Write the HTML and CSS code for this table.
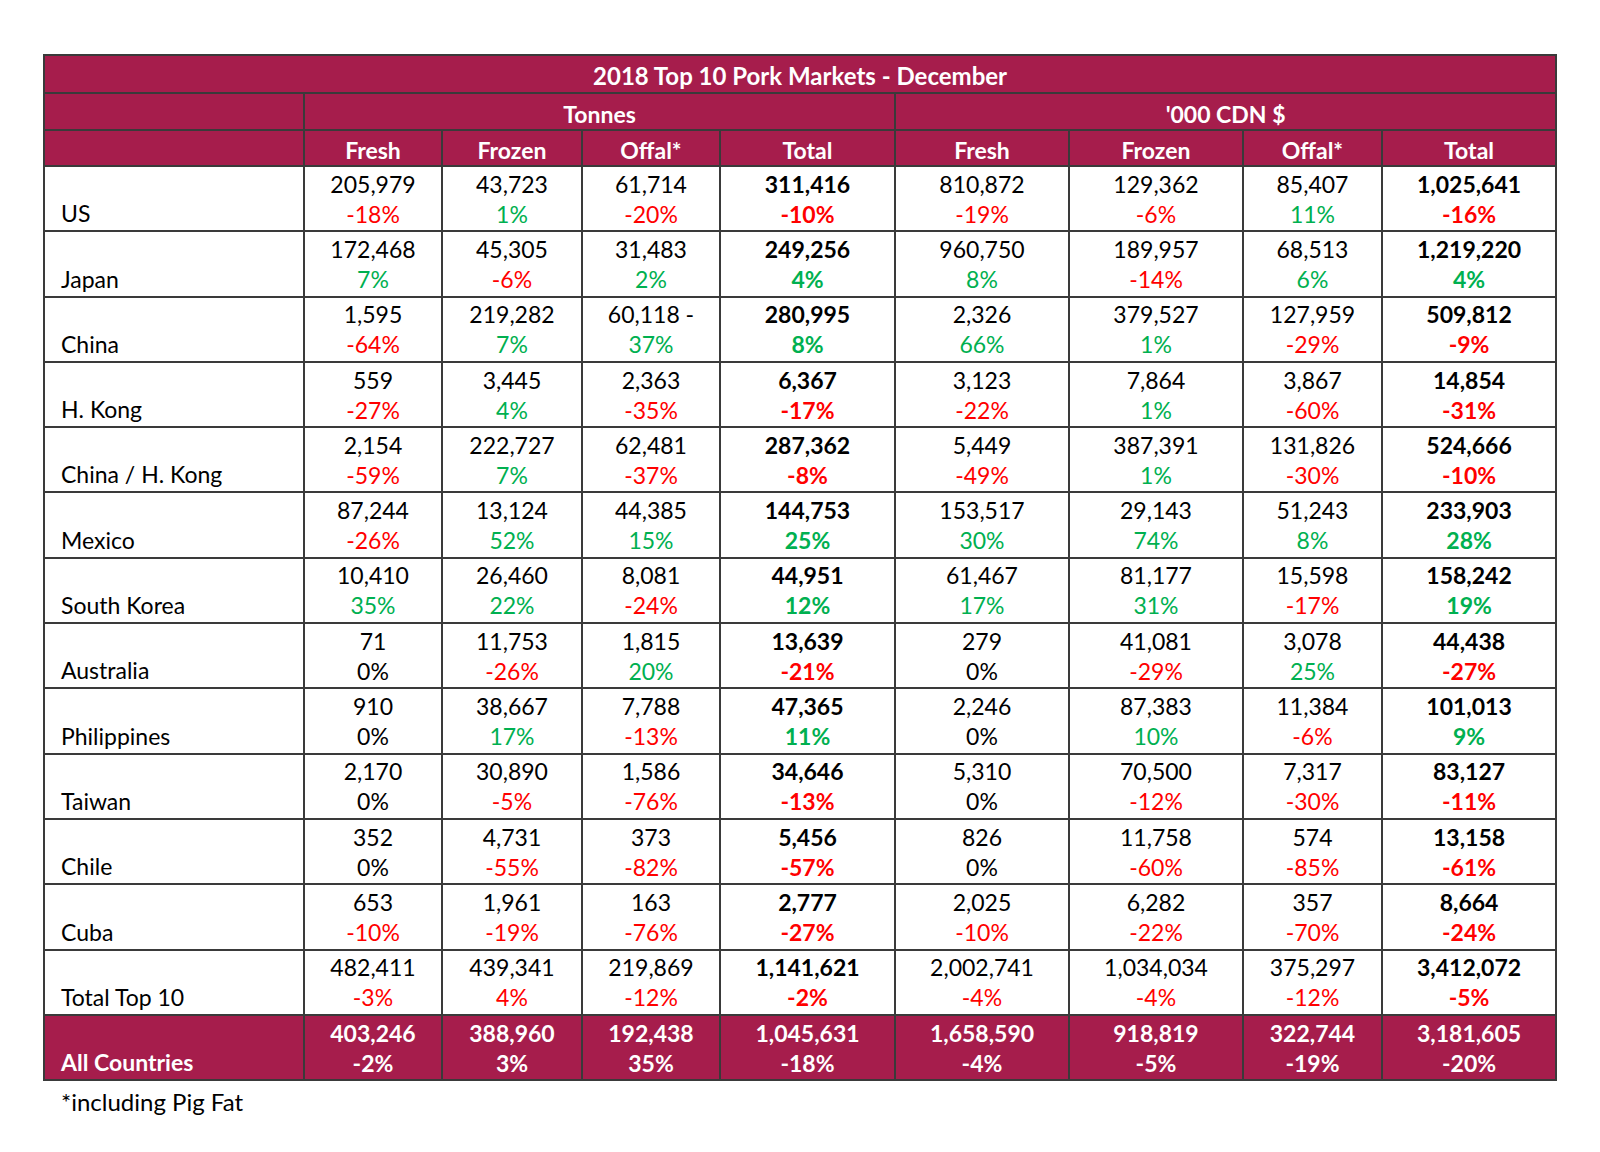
FILE: index.html
```html
<!DOCTYPE html>
<html>
<head>
<meta charset="utf-8">
<link rel="stylesheet" href="styles.css">
</head>
<body>
<div class="page">
<table class="pork">
<colgroup>
<col class="c-name"><col class="c-t1"><col class="c-t2"><col class="c-t3"><col class="c-t4"><col class="c-d1"><col class="c-d2"><col class="c-d3"><col class="c-d4">
</colgroup>
<thead>
<tr class="h-title"><th colspan="9">2018 Top 10 Pork Markets - December</th></tr>
<tr class="h-group"><th></th><th colspan="4">Tonnes</th><th colspan="4">'000 CDN $</th></tr>
<tr class="h-cols"><th></th><th>Fresh</th><th>Frozen</th><th>Offal*</th><th>Total</th><th>Fresh</th><th>Frozen</th><th>Offal*</th><th>Total</th></tr>
</thead>
<tbody>
<tr><td class="name">US</td>
<td>205,979<br><span class="r">-18%</span></td><td>43,723<br><span class="g">1%</span></td><td>61,714<br><span class="r">-20%</span></td><td class="b">311,416<br><span class="r">-10%</span></td>
<td>810,872<br><span class="r">-19%</span></td><td>129,362<br><span class="r">-6%</span></td><td>85,407<br><span class="g">11%</span></td><td class="b">1,025,641<br><span class="r">-16%</span></td></tr>
<tr><td class="name">Japan</td>
<td>172,468<br><span class="g">7%</span></td><td>45,305<br><span class="r">-6%</span></td><td>31,483<br><span class="g">2%</span></td><td class="b">249,256<br><span class="g">4%</span></td>
<td>960,750<br><span class="g">8%</span></td><td>189,957<br><span class="r">-14%</span></td><td>68,513<br><span class="g">6%</span></td><td class="b">1,219,220<br><span class="g">4%</span></td></tr>
<tr><td class="name">China</td>
<td>1,595<br><span class="r">-64%</span></td><td>219,282<br><span class="g">7%</span></td><td>60,118 -<br><span class="g">37%</span></td><td class="b">280,995<br><span class="g">8%</span></td>
<td>2,326<br><span class="g">66%</span></td><td>379,527<br><span class="g">1%</span></td><td>127,959<br><span class="r">-29%</span></td><td class="b">509,812<br><span class="r">-9%</span></td></tr>
<tr><td class="name">H. Kong</td>
<td>559<br><span class="r">-27%</span></td><td>3,445<br><span class="g">4%</span></td><td>2,363<br><span class="r">-35%</span></td><td class="b">6,367<br><span class="r">-17%</span></td>
<td>3,123<br><span class="r">-22%</span></td><td>7,864<br><span class="g">1%</span></td><td>3,867<br><span class="r">-60%</span></td><td class="b">14,854<br><span class="r">-31%</span></td></tr>
<tr><td class="name">China / H. Kong</td>
<td>2,154<br><span class="r">-59%</span></td><td>222,727<br><span class="g">7%</span></td><td>62,481<br><span class="r">-37%</span></td><td class="b">287,362<br><span class="r">-8%</span></td>
<td>5,449<br><span class="r">-49%</span></td><td>387,391<br><span class="g">1%</span></td><td>131,826<br><span class="r">-30%</span></td><td class="b">524,666<br><span class="r">-10%</span></td></tr>
<tr><td class="name">Mexico</td>
<td>87,244<br><span class="r">-26%</span></td><td>13,124<br><span class="g">52%</span></td><td>44,385<br><span class="g">15%</span></td><td class="b">144,753<br><span class="g">25%</span></td>
<td>153,517<br><span class="g">30%</span></td><td>29,143<br><span class="g">74%</span></td><td>51,243<br><span class="g">8%</span></td><td class="b">233,903<br><span class="g">28%</span></td></tr>
<tr><td class="name">South Korea</td>
<td>10,410<br><span class="g">35%</span></td><td>26,460<br><span class="g">22%</span></td><td>8,081<br><span class="r">-24%</span></td><td class="b">44,951<br><span class="g">12%</span></td>
<td>61,467<br><span class="g">17%</span></td><td>81,177<br><span class="g">31%</span></td><td>15,598<br><span class="r">-17%</span></td><td class="b">158,242<br><span class="g">19%</span></td></tr>
<tr><td class="name">Australia</td>
<td>71<br><span>0%</span></td><td>11,753<br><span class="r">-26%</span></td><td>1,815<br><span class="g">20%</span></td><td class="b">13,639<br><span class="r">-21%</span></td>
<td>279<br><span>0%</span></td><td>41,081<br><span class="r">-29%</span></td><td>3,078<br><span class="g">25%</span></td><td class="b">44,438<br><span class="r">-27%</span></td></tr>
<tr><td class="name">Philippines</td>
<td>910<br><span>0%</span></td><td>38,667<br><span class="g">17%</span></td><td>7,788<br><span class="r">-13%</span></td><td class="b">47,365<br><span class="g">11%</span></td>
<td>2,246<br><span>0%</span></td><td>87,383<br><span class="g">10%</span></td><td>11,384<br><span class="r">-6%</span></td><td class="b">101,013<br><span class="g">9%</span></td></tr>
<tr><td class="name">Taiwan</td>
<td>2,170<br><span>0%</span></td><td>30,890<br><span class="r">-5%</span></td><td>1,586<br><span class="r">-76%</span></td><td class="b">34,646<br><span class="r">-13%</span></td>
<td>5,310<br><span>0%</span></td><td>70,500<br><span class="r">-12%</span></td><td>7,317<br><span class="r">-30%</span></td><td class="b">83,127<br><span class="r">-11%</span></td></tr>
<tr><td class="name">Chile</td>
<td>352<br><span>0%</span></td><td>4,731<br><span class="r">-55%</span></td><td>373<br><span class="r">-82%</span></td><td class="b">5,456<br><span class="r">-57%</span></td>
<td>826<br><span>0%</span></td><td>11,758<br><span class="r">-60%</span></td><td>574<br><span class="r">-85%</span></td><td class="b">13,158<br><span class="r">-61%</span></td></tr>
<tr><td class="name">Cuba</td>
<td>653<br><span class="r">-10%</span></td><td>1,961<br><span class="r">-19%</span></td><td>163<br><span class="r">-76%</span></td><td class="b">2,777<br><span class="r">-27%</span></td>
<td>2,025<br><span class="r">-10%</span></td><td>6,282<br><span class="r">-22%</span></td><td>357<br><span class="r">-70%</span></td><td class="b">8,664<br><span class="r">-24%</span></td></tr>
<tr><td class="name">Total Top 10</td>
<td>482,411<br><span class="r">-3%</span></td><td>439,341<br><span class="r">4%</span></td><td>219,869<br><span class="r">-12%</span></td><td class="b">1,141,621<br><span class="r">-2%</span></td>
<td>2,002,741<br><span class="r">-4%</span></td><td>1,034,034<br><span class="r">-4%</span></td><td>375,297<br><span class="r">-12%</span></td><td class="b">3,412,072<br><span class="r">-5%</span></td></tr>
<tr class="all"><td class="name">All Countries</td>
<td>403,246<br>-2%</td><td>388,960<br>3%</td><td>192,438<br>35%</td><td>1,045,631<br>-18%</td>
<td>1,658,590<br>-4%</td><td>918,819<br>-5%</td><td>322,744<br>-19%</td><td>3,181,605<br>-20%</td></tr>
</tbody>
</table>
<p class="note">*including Pig Fat</p>
</div>
</body>
</html>
```

FILE: styles.css
```css
html, body {
  margin: 0;
  padding: 0;
  background: #ffffff;
}
body {
  font-family: Lato, "Open Sans", "Liberation Sans", sans-serif;
  color: #000000;
}
.page {
  padding: 54px 0 0 43px;
}
.pork {
  border-collapse: collapse;
  table-layout: fixed;
  width: 1512px;
  font-size: 23px;
}
.c-name { width: 260px; }
.c-t1 { width: 138px; }
.c-t2 { width: 140px; }
.c-t3 { width: 138px; }
.c-t4 { width: 175px; }
.c-d1 { width: 174px; }
.c-d2 { width: 174px; }
.c-d3 { width: 139px; }
.c-d4 { width: 174px; }
.pork th, .pork td {
  border: 2px solid #3a3a3a;
  padding: 0 4px;
  text-align: center;
}
.pork thead th {
  background: #a61d4c;
  color: #ffffff;
  font-weight: 700;
  font-size: 23px;
  line-height: 26px;
  padding-top: 4px;
}
.pork thead .h-title th {
  font-size: 24px;
}
.h-title { height: 38px; }
.h-group { height: 37px; }
.h-cols { height: 36px; }
.pork tbody tr { height: 65.3px; }
.pork tbody td {
  line-height: 30px;
  padding-top: 1px;
  padding-bottom: 1px;
  vertical-align: middle;
}
.pork tbody td.name {
  text-align: left;
  vertical-align: bottom;
  padding-left: 16px;
  padding-bottom: 2px;
}
.b { font-weight: 700; }
.r { color: #ff0000; }
.g { color: #00b050; }
.all td {
  background: #a61d4c;
  color: #ffffff;
  font-weight: 700;
}
.note {
  margin: 6px 0 0 18px;
  font-size: 24px;
}
```
